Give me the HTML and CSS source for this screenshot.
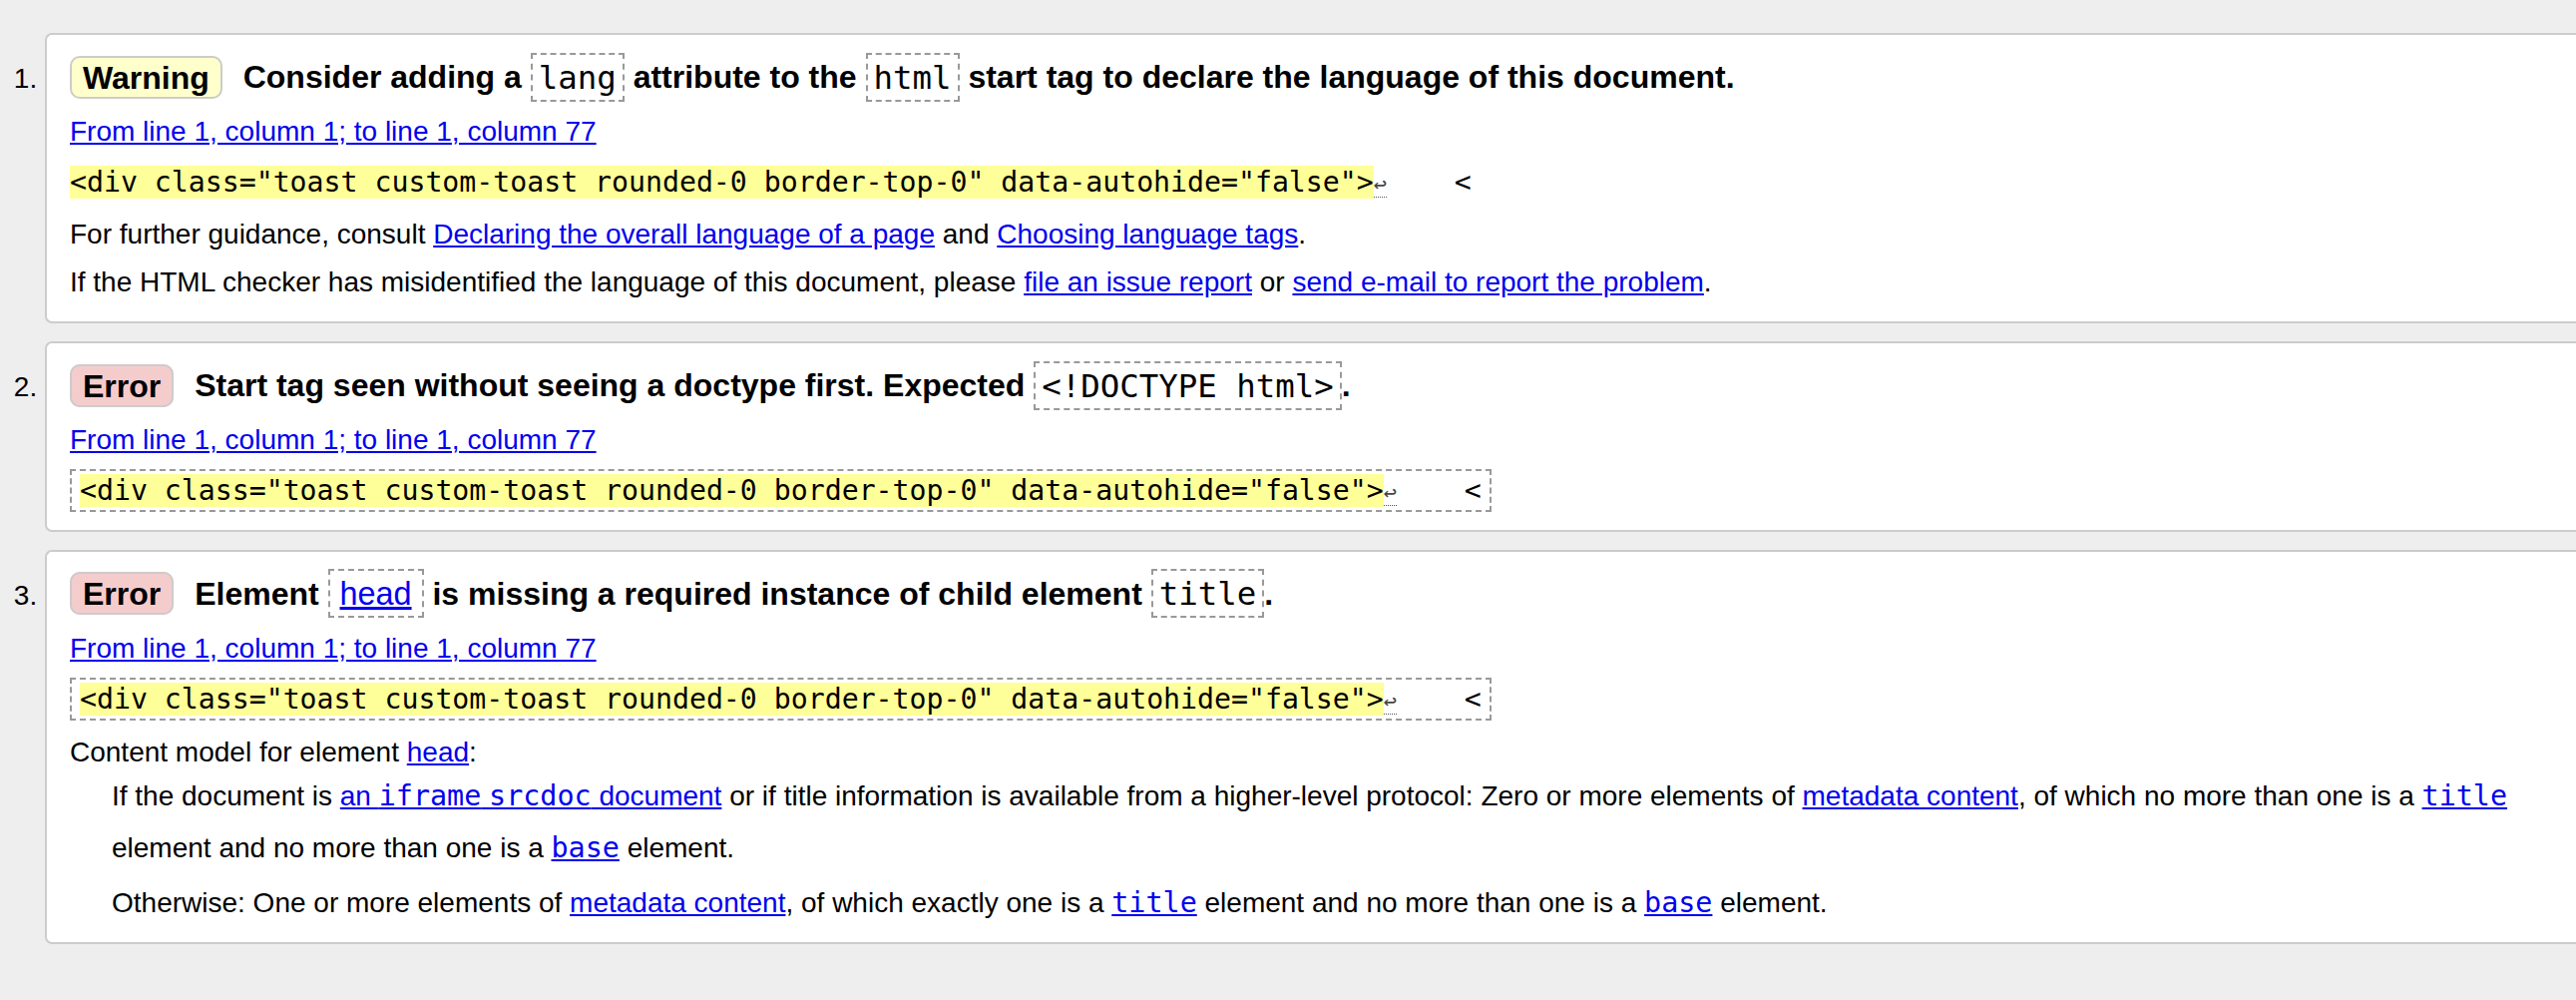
FILE: index.html
```html
<!DOCTYPE html>
<html lang="en">
<head>
<meta charset="utf-8">
<title>Validator messages</title>
<link rel="stylesheet" href="styles.css">
</head>
<body>
<ol class="messages">
  <li class="msg">
    <p class="msg-head"><strong class="badge badge-warning">Warning</strong> <span>Consider adding a <code class="kw">lang</code> attribute to the <code class="kw">html</code> start tag to declare the language of this document.</span></p>
    <p class="loc"><a href="#">From line 1, column 1; to line 1, column 77</a></p>
    <p class="extract"><code class="src"><b class="hl">&lt;div class="toast custom-toast rounded-0 border-top-0" data-autohide="false"&gt;</b><span class="lf">↩</span>    &lt;</code></p>
    <p class="info info-first">For further guidance, consult <a href="#">Declaring the overall language of a page</a> and <a href="#">Choosing language tags</a>.</p>
    <p class="info">If the HTML checker has misidentified the language of this document, please <a href="#">file an issue report</a> or <a href="#">send e-mail to report the problem</a>.</p>
  </li>
  <li class="msg">
    <p class="msg-head"><strong class="badge badge-error">Error</strong> <span>Start tag seen without seeing a doctype first. Expected <code class="kw">&lt;!DOCTYPE html&gt;</code>.</span></p>
    <p class="loc"><a href="#">From line 1, column 1; to line 1, column 77</a></p>
    <p class="extract"><code class="src src-boxed"><b class="hl">&lt;div class="toast custom-toast rounded-0 border-top-0" data-autohide="false"&gt;</b><span class="lf">↩</span>    &lt;</code></p>
  </li>
  <li class="msg">
    <p class="msg-head"><strong class="badge badge-error">Error</strong> <span>Element <code class="kw"><a class="kw-link" href="#">head</a></code> is missing a required instance of child element <code class="kw">title</code>.</span></p>
    <p class="loc"><a href="#">From line 1, column 1; to line 1, column 77</a></p>
    <p class="extract"><code class="src src-boxed"><b class="hl">&lt;div class="toast custom-toast rounded-0 border-top-0" data-autohide="false"&gt;</b><span class="lf">↩</span>    &lt;</code></p>
    <dl class="model">
      <dt class="model-title">Content model for element <a href="#">head</a>:</dt>
      <dd class="model-case model-case-wide">If the document is <a href="#">an <code class="mono">iframe</code> <code class="mono">srcdoc</code> document</a> or if title information is available from a higher-level protocol: Zero or more elements of <a href="#">metadata content</a>, of which no more than one is a <a href="#"><code class="mono">title</code></a> element and no more than one is a <a href="#"><code class="mono">base</code></a> element.</dd>
      <dd class="model-case model-case-last">Otherwise: One or more elements of <a href="#">metadata content</a>, of which exactly one is a <a href="#"><code class="mono">title</code></a> element and no more than one is a <a href="#"><code class="mono">base</code></a> element.</dd>
    </dl>
  </li>
</ol>
</body>
</html>
```
FILE: styles.css
```css
html {
  background: #eeeeee;
}

body {
  margin: 0;
  font-family: "Liberation Sans", Arial, Helvetica, sans-serif;
  font-size: 28px;
  color: #000;
}

p, dl, dt, dd {
  margin: 0;
}

a {
  color: #0000ee;
}

.messages {
  margin: 33px 0 0;
  padding: 0 0 0 45px;
  list-style: decimal;
}

.msg {
  background: #fff;
  border: 2px solid #cccccc;
  border-right: 0;
  border-radius: 7px 0 0 7px;
  padding: 20px 22px 22.4px 23px;
  margin-bottom: 18.4px;
  line-height: 32px;
}

.msg-head {
  font-size: 32px;
  font-weight: 700;
  line-height: 44px;
}

.badge {
  font-weight: 700;
  padding: 1.5px 11px;
  border: 2px solid #cccccc;
  border-radius: 10px;
  margin-right: 12px;
}

.badge-warning {
  background: #ffffcc;
}

.badge-error {
  background: #f5cccc;
}

.kw {
  font-family: "DejaVu Sans Mono", "Liberation Mono", monospace;
  font-size: 32.4px;
  font-weight: 400;
  border: 2px dashed #999999;
  padding: 3.5px 6px;
}

.kw-link {
  font-family: "Liberation Sans", Arial, sans-serif;
  margin: 0 4px;
}

.loc {
  margin-top: 17.2px;
  line-height: 32px;
}

.extract {
  margin-top: 18.7px;
  line-height: 32px;
}

.src {
  font-family: "DejaVu Sans Mono", "Liberation Mono", monospace;
  font-size: 28.2px;
  white-space: pre;
}

.src-boxed {
  border: 2px dashed #999999;
  padding: 3px 8px;
}

.hl {
  font-weight: 400;
  background: #ffff99;
}

.lf {
  font-size: 22px;
  line-height: 20px;
  color: #444;
  border-bottom: 1px dotted #555;
}

.info {
  margin-top: 16.3px;
  line-height: 32px;
}

.info-first {
  margin-top: 20.3px;
}

.model-title {
  margin-top: 21px;
  line-height: 32px;
}

.model-case {
  margin-left: 42px;
}

.model-case-wide {
  margin-top: 2px;
  line-height: 52px;
}

.model-case-last {
  margin-top: 13.7px;
  line-height: 32px;
}

.mono {
  font-family: "DejaVu Sans Mono", "Liberation Mono", monospace;
  font-size: 28.4px;
}
```
